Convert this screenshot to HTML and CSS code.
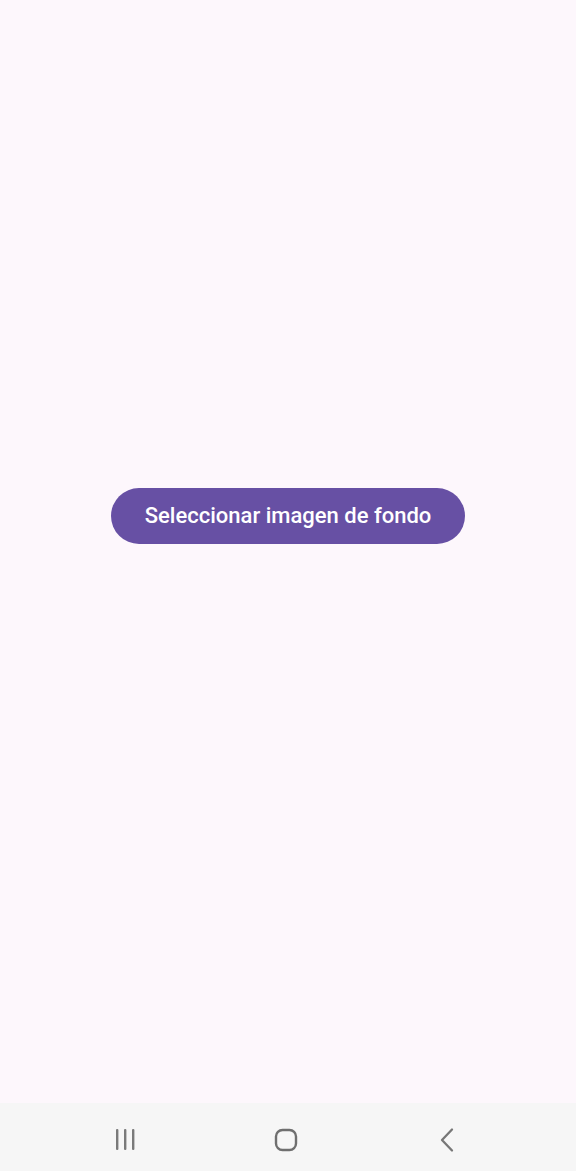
FILE: index.html
```html
<!DOCTYPE html>
<html lang="es">
<head>
<meta charset="utf-8">
<title>Seleccionar imagen</title>
<link rel="stylesheet" href="styles.css">
</head>
<body>
<div class="screen">
  <main class="content">
    <button class="btn">Seleccionar imagen de fondo</button>
  </main>
  <nav class="navbar">
    <span class="nav-item">
      <svg width="22" height="24" viewBox="0 0 22 24"><g fill="#7a7a7a"><rect x="2" y="1" width="2.4" height="21" rx="1"/><rect x="10" y="1" width="2.4" height="21" rx="1"/><rect x="18" y="1" width="2.4" height="21" rx="1"/></g></svg>
    </span>
    <span class="nav-item">
      <svg width="24" height="24" viewBox="0 0 24 24"><rect x="2" y="2" width="20" height="20" rx="6.5" fill="none" stroke="#6f6f6f" stroke-width="2.4"/></svg>
    </span>
    <span class="nav-item">
      <svg width="18" height="26" viewBox="0 0 18 26"><path d="M14 2.5 L4 13 L14 23.5" fill="none" stroke="#777" stroke-width="2.3" stroke-linecap="round" stroke-linejoin="round"/></svg>
    </span>
  </nav>
</div>
</body>
</html>
```

FILE: styles.css
```css
html, body {
  margin: 0;
  padding: 0;
}
body {
  background: #fdf7fc;
  font-family: Roboto, "Noto Sans", sans-serif;
}
.screen {
  display: flex;
  flex-direction: column;
  height: 1171px;
}
.content {
  flex: 1;
  display: flex;
  align-items: center;
  justify-content: center;
  padding-bottom: 72px;
}
.btn {
  width: 354px;
  height: 56px;
  border: none;
  border-radius: 28px;
  background: #6750a4;
  color: #ffffff;
  font-family: Roboto, "Noto Sans", sans-serif;
  font-weight: 500;
  font-size: 22px;
  letter-spacing: 0;
  padding: 0;
}
.navbar {
  height: 68px;
  box-sizing: border-box;
  background: #f6f6f6;
  display: grid;
  grid-template-columns: repeat(3, 161px);
  justify-content: center;
  align-items: center;
  justify-items: center;
  padding: 5px 4px 0 0;
}
.nav-item {
  display: flex;
  align-items: center;
  justify-content: center;
}
.nav-item svg {
  display: block;
}
```
